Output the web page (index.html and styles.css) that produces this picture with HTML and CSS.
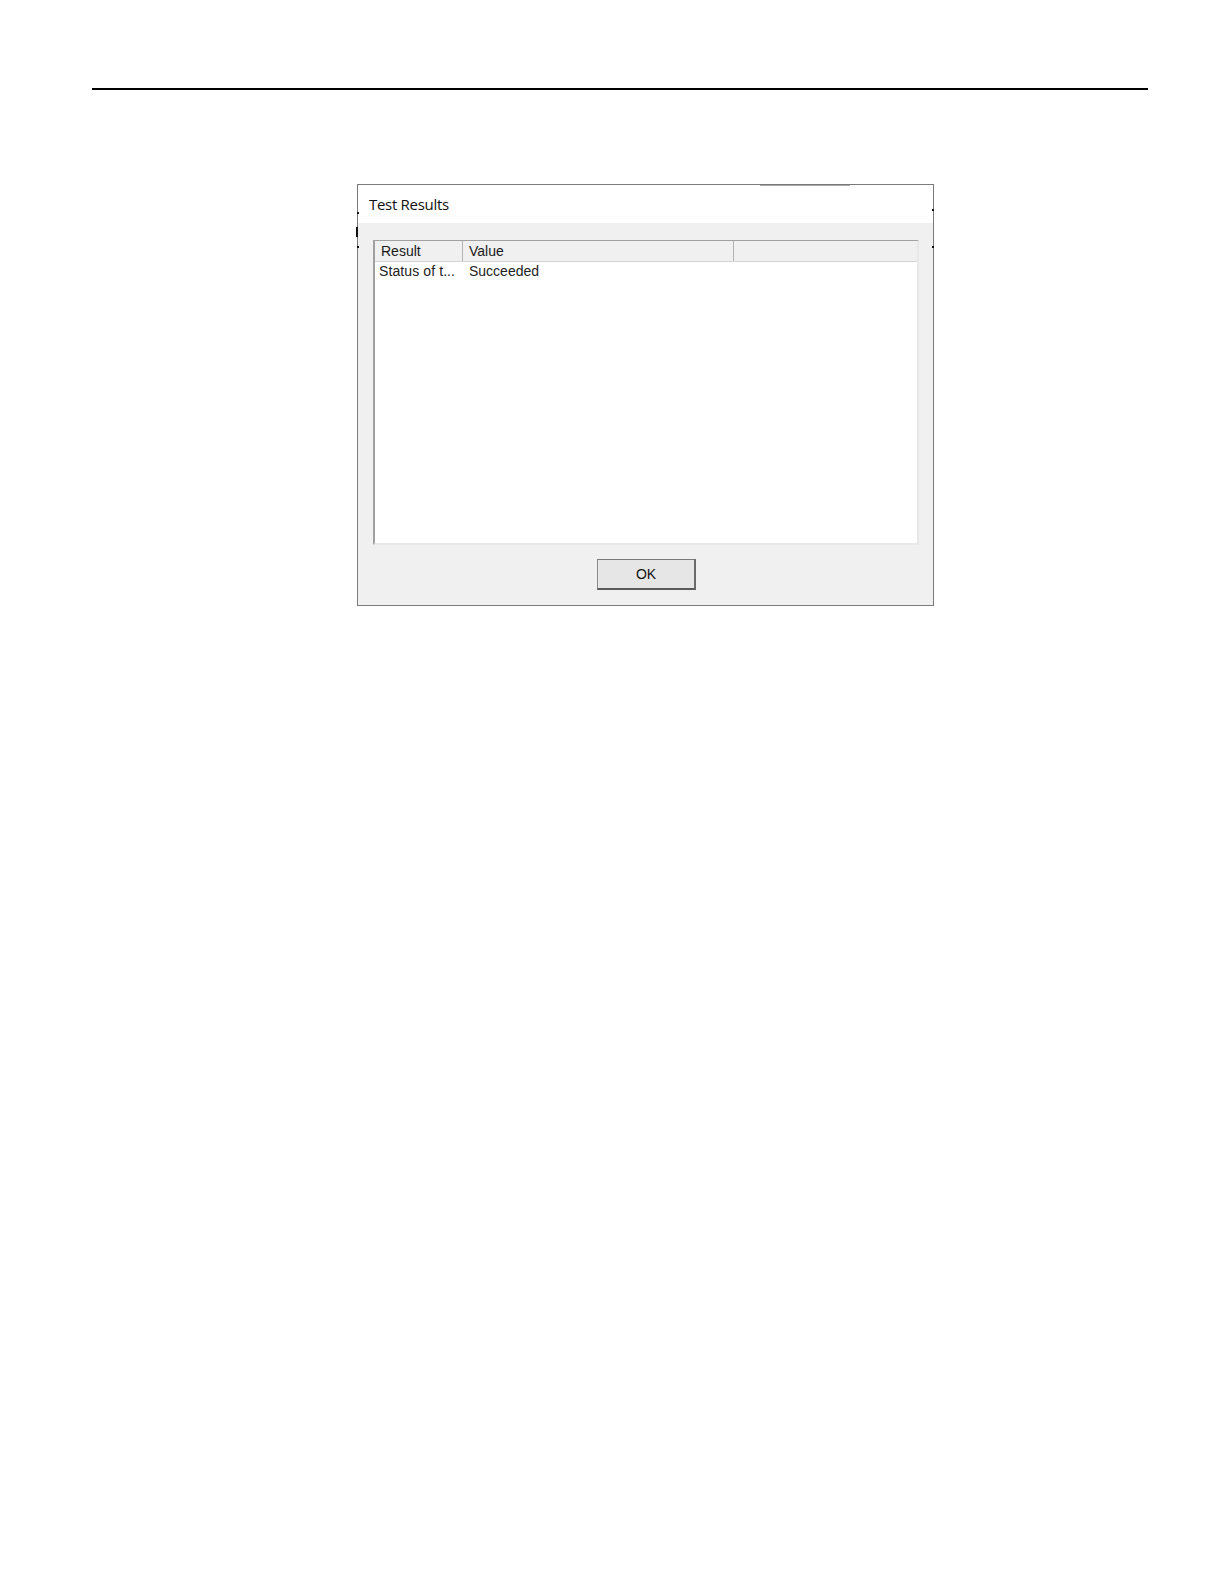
FILE: index.html
```html
<!DOCTYPE html>
<html>
<head>
<meta charset="utf-8">
<link rel="stylesheet" href="styles.css">
</head>
<body>
<div class="page">
  <div class="rule"></div>
  <div class="dialog">
    <span class="tick tick-l1"></span>
    <span class="tick tick-l2"></span>
    <span class="tick tick-l3"></span>
    <span class="tick tick-r1"></span>
    <span class="tick tick-r2"></span>
    <span class="ghost"></span>
    <div class="titlebar">Test Results</div>
    <div class="body">
      <div class="listview">
        <div class="header">
          <div class="col col-result">Result</div>
          <div class="col col-value">Value</div>
          <div class="col col-rest"></div>
        </div>
        <div class="row">
          <div class="cell cell-result">Status of t...</div>
          <div class="cell cell-value">Succeeded</div>
        </div>
      </div>
      <div class="buttons">
        <button class="btn">OK</button>
      </div>
    </div>
  </div>
</div>
</body>
</html>
```

FILE: styles.css
```css
html, body {
  margin: 0;
  padding: 0;
  background: #ffffff;
}
.page {
  padding-top: 88px;
}
.rule {
  margin-left: 92px;
  width: 1056px;
  height: 2px;
  background: #000000;
}
.dialog {
  position: relative;
  margin-left: 357px;
  margin-top: 94px;
  width: 577px;
  height: 422px;
  box-sizing: border-box;
  border: 1px solid #7a7a7a;
  background: #f0f0f0;
  display: flex;
  flex-direction: column;
}
.titlebar {
  height: 38px;
  background: #ffffff;
  font-family: "Open Sans", "Noto Sans", sans-serif;
  font-size: 15px;
  color: #111;
  padding-left: 11px;
  line-height: 38px;
  letter-spacing: -0.3px;
  flex: none;
}
.body {
  flex: 1;
  padding: 17px 14px 15px 15px;
  display: flex;
  flex-direction: column;
}
.listview {
  height: 305px;
  flex: none;
  box-sizing: border-box;
  border-left: 2px solid #a0a0a0;
  border-top: 1px solid #a0a0a0;
  border-right: 2px solid #e8e8e8;
  border-bottom: 2px solid #e8e8e8;
  background: #ffffff;
  font-family: "Liberation Sans", Arial, sans-serif;
  font-size: 14px;
  color: #1a1a1a;
}
.header {
  display: flex;
  height: 21px;
  box-sizing: border-box;
  background: #f0f0f0;
  border-bottom: 1px solid #d5d5d5;
}
.col {
  box-sizing: border-box;
  line-height: 21px;
  padding-left: 6px;
}
.col-result {
  width: 88px;
  border-right: 1px solid #b4b4b4;
}
.col-value {
  width: 271px;
  border-right: 1px solid #b4b4b4;
}
.col-rest {
  flex: 1;
}
.row {
  display: flex;
  height: 19px;
  line-height: 19px;
}
.cell-result {
  width: 88px;
  padding-left: 4px;
  box-sizing: border-box;
  color: #222;
  letter-spacing: 0.1px;
}
.cell-value {
  padding-left: 6px;
  color: #222;
}
.buttons {
  margin-top: 14px;
  display: flex;
  justify-content: center;
  padding-left: 1px;
}
.btn {
  width: 99px;
  height: 31px;
  box-sizing: border-box;
  border: 1px solid #adadad;
  border-top-color: #7a7a7a;
  border-left-color: #8a8a8a;
  border-right: 2px solid #6a6a6a;
  border-bottom: 2px solid #5a5a5a;
  background: #e6e6e6;
  font-family: "Liberation Sans", Arial, sans-serif;
  font-size: 14px;
  color: #111;
  padding: 0;
  margin: 0;
}
.tick {
  position: absolute;
  width: 2px;
  background: #111;
}
.tick-l1 { left: -1px; top: 27px; height: 2px; }
.tick-l2 { left: -2px; top: 42px; height: 10px; }
.tick-l3 { left: -1px; top: 61px; height: 2px; }
.tick-r1 { right: -1px; top: 24px; height: 2px; }
.tick-r2 { right: -1px; top: 61px; height: 2px; }
.ghost {
  position: absolute;
  left: 402px;
  top: 0;
  width: 90px;
  height: 1px;
  background: #a8a8a8;
}
```
